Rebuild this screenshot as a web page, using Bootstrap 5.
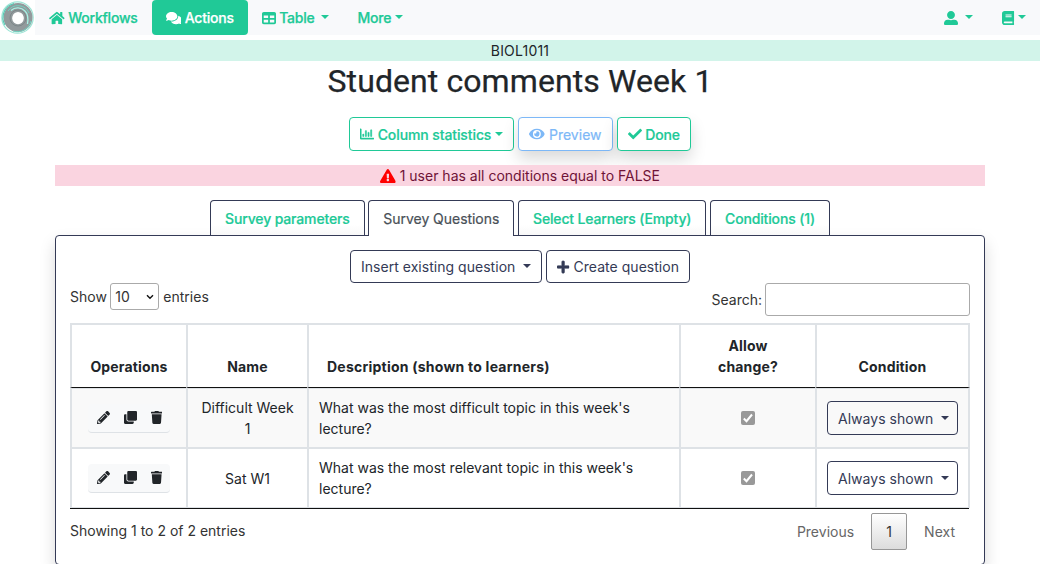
<!DOCTYPE html>
<html lang="en">
<head>
<meta charset="utf-8">
<meta name="viewport" content="width=device-width, initial-scale=1">
<title>Student comments Week 1</title>
<link href="https://cdn.jsdelivr.net/npm/bootstrap@5.3.0/dist/css/bootstrap.min.css" rel="stylesheet">
<style>
:root{--brand:#20c997;--ink:#343a56}
html,body{height:564px;overflow:hidden}
body{font-family:Inter,"Liberation Sans",sans-serif;font-size:14px;line-height:21px;color:#212529}
svg.ic{height:1em;width:auto;fill:currentColor;vertical-align:-.125em;flex:none}
.topbar{height:35px;background:#f8f9fb;padding:0}
.logo-box{width:35px;height:35px;background:#fff}
.topbar .nav-link{height:35px;padding:7px 14px;color:var(--brand);font-weight:500;letter-spacing:-.24px;-webkit-text-stroke:.25px;border-radius:4px;white-space:nowrap}
.topbar .nav-link.active{background:#20c997;color:#fff}
.topbar svg.ic{stroke:none}
.dropdown-toggle::after{vertical-align:4px;border-top-width:4px;border-left-width:4px;border-right-width:4px;margin-left:4px}
.topbar .dropdown-toggle::after{margin-left:3.5px}
.topbar .user-link{padding-right:15px}
.course{margin-top:5px;height:21px;background:#d2f4ea;letter-spacing:.2px}
h1{font-family:Roboto,sans-serif;font-size:32px;line-height:40px;height:38px;font-weight:400;letter-spacing:.09px;-webkit-text-stroke:.25px}
.page{width:930px}
.btn{font-size:14px;line-height:21px;padding:5px 10px;border-radius:4px;white-space:nowrap}
.btn-brand{color:var(--brand);border-color:var(--brand);font-weight:500;letter-spacing:-.1px;-webkit-text-stroke:.2px;background:#fff;height:34px;padding-top:5px}
.btn-brand svg.ic{stroke:none}
.btn-brand.btn-prev{color:#7db8f7;border-color:#7db8f7;font-weight:400;letter-spacing:0}
.lift{box-shadow:0 8px 16px rgba(0,0,0,.15)}
.btn-ink{color:var(--ink);border-color:var(--ink);height:33px;letter-spacing:.03px}
.toolbar{margin-top:18px}
.warnbar{height:21px;margin-top:14px;background:#fad4e0;color:#6f1337}
.warnbar svg.ic{color:red}
.survey-tabs{gap:3.700px;margin-top:14px}
.survey-tabs .nav-link{height:35px;padding:7px 14px;border:1px solid var(--ink);border-bottom:0;border-radius:4px 4px 0 0;color:var(--brand);font-weight:500;letter-spacing:-.15px;-webkit-text-stroke:.2px;background:linear-gradient(#fff 70%,#f8f8f8);white-space:nowrap}
.survey-tabs .nav-link.active{height:36px;margin-bottom:-1px;color:#495057;font-weight:400;letter-spacing:-.04px;background:#fff;position:relative;z-index:1}
.panel{border:1px solid var(--ink);border-radius:4px;height:330px;padding:14px;box-shadow:0 8px 16px rgba(0,0,0,.15);background:#fff}
.filters{height:33px;margin-bottom:7px;color:#333}
.len-row{height:27px}
.len{width:49px;height:27px;border:1px solid #aaa;border-radius:3px;padding:2px 4px;margin:0 4px 0 3.500px}
.find{width:205px;height:33px;border:1px solid #aaa;border-radius:3px;margin-left:3px}
.tbl-wrap{border-bottom:1px solid #111;height:186px;width:899px}
.qtable{border-collapse:separate;border-spacing:0;table-layout:fixed;width:900px}
.qtable th,.qtable td{border:0 solid #dee2e6;border-left-width:2px;text-align:center;vertical-align:middle;padding:0 9px}
.qtable th:last-child,.qtable td:last-child{border-right-width:2px}
.qtable th{height:65px;border-top-width:2px;border-bottom:1px solid #111;vertical-align:bottom;padding:0 17px 10px;font-weight:700;letter-spacing:.15px}
.qtable th.text-start{padding-left:18px;letter-spacing:.23px}
.qtable td{height:60px;border-top-width:2px}
.qtable td.text-start{padding-left:10px}
.qtable tbody tr:first-child td{height:59px;border-top-width:1px;background:#f9f9f9}
.qtable tbody tr:last-child td{height:61px;border-bottom:1px solid #dee2e6}
.ops{width:82px;height:29px;background:#f8f9fa;border-radius:4px;border-bottom:1px solid #dee2e6;font-size:13px;gap:14px;margin:0 auto;padding-left:1px}
.tick{width:14px;height:14px;background:#999;border-radius:2px;margin-top:4px}
.cond{height:34px;width:131px}
.foot{margin-top:4px;color:#333}
.foot>div:first-child{padding-top:7px}
.pager{padding-right:15px}
.pager>span{color:#666}
.pager .cur{width:36px;height:37px;margin:0 17px;border:1px solid #979797;border-radius:2px;background:linear-gradient(#fff,#dcdcdc);color:#333}
</style>
</head>
<body>
<svg class="d-none">
<symbol id="home" viewBox="0 0 576 512"><path d="M280.37 148.26L96 300.11V464a16 16 0 0 0 16 16l112.06-.29a16 16 0 0 0 15.92-16V368a16 16 0 0 1 16-16h64a16 16 0 0 1 16 16v95.64a16 16 0 0 0 16 16.05L464 480a16 16 0 0 0 16-16V300L295.67 148.26a12.19 12.19 0 0 0-15.3 0zM571.6 251.47L488 182.56V44.05a12 12 0 0 0-12-12h-56a12 12 0 0 0-12 12v72.61L318.47 43a48 48 0 0 0-61 0L4.34 251.47a12 12 0 0 0-1.6 16.9l25.5 31A12 12 0 0 0 45.15 301l235.22-193.74a12.19 12.19 0 0 1 15.3 0L530.9 301a12 12 0 0 0 16.9-1.6l25.5-31a12 12 0 0 0-1.7-16.93z"/></symbol>
<symbol id="comments" viewBox="0 0 576 512"><path d="M416 192c0-88.4-93.1-160-208-160S0 103.6 0 192c0 34.3 14.1 65.9 38 92-13.4 30.2-35.5 54.2-35.8 54.5-2.2 2.3-2.8 5.7-1.5 8.7S4.8 352 8 352c36.6 0 66.9-12.3 88.7-25 32.2 15.7 70.3 25 111.3 25 114.9 0 208-71.6 208-160zm122 220c23.9-26 38-57.7 38-92 0-66.9-53.5-124.2-129.3-148.1.9 6.6 1.3 13.3 1.3 20.1 0 105.9-107.7 192-240 192-10.8 0-21.3-.8-31.7-1.9C207.8 439.6 281.8 480 368 480c41 0 79.1-9.2 111.3-25 21.8 12.7 52.1 25 88.7 25 3.2 0 6.1-1.9 7.3-4.8 1.3-2.9.7-6.3-1.5-8.7-.3-.3-22.4-24.2-35.8-54.5z"/></symbol>
<symbol id="grid" viewBox="0 0 512 512"><path d="M64 256V160H224v96H64zm0 64H224v96H64V320zm224 96V320H448v96H288zM448 256H288V160H448v96zM64 32C28.7 32 0 60.7 0 96V416c0 35.3 28.7 64 64 64H448c35.3 0 64-28.7 64-64V96c0-35.3-28.7-64-64-64H64z"/></symbol>
<symbol id="user" viewBox="0 0 512 512"><path d="M256 288c79.5 0 144-64.5 144-144S335.5 0 256 0 112 64.5 112 144s64.5 144 144 144zm128 32h-55.1c-22.2 10.2-46.9 16-72.9 16s-50.6-5.8-72.9-16H128C57.3 320 0 377.3 0 448v16c0 26.5 21.5 48 48 48h416c26.5 0 48-21.5 48-48v-16c0-70.7-57.3-128-128-128z"/></symbol>
<symbol id="book" viewBox="0 0 448 512"><path d="M448 360V24c0-13.3-10.7-24-24-24H96C43 0 0 43 0 96v320c0 53 43 96 96 96h328c13.3 0 24-10.7 24-24v-16c0-7.5-3.5-14.3-8.9-18.7-4.2-15.4-4.2-59.3 0-74.7 5.4-4.3 8.9-11.1 8.9-18.6zM128 134c0-3.3 2.7-6 6-6h212c3.3 0 6 2.7 6 6v20c0 3.3-2.7 6-6 6H134c-3.3 0-6-2.7-6-6v-20zm0 64c0-3.3 2.7-6 6-6h212c3.3 0 6 2.7 6 6v20c0 3.3-2.7 6-6 6H134c-3.3 0-6-2.7-6-6v-20zm253.4 250H96c-17.7 0-32-14.3-32-32 0-17.6 14.4-32 32-32h285.4c-1.9 17.1-1.9 46.9 0 64z"/></symbol>
<symbol id="chart" viewBox="0 0 512 512"><path d="M396.8 352h22.4c6.4 0 12.8-6.4 12.8-12.8V108.8c0-6.4-6.4-12.8-12.8-12.8h-22.4c-6.4 0-12.8 6.4-12.8 12.8v230.4c0 6.4 6.4 12.8 12.8 12.8zm-192 0h22.4c6.4 0 12.8-6.4 12.8-12.8V140.8c0-6.4-6.4-12.8-12.8-12.8h-22.4c-6.4 0-12.8 6.4-12.8 12.8v198.4c0 6.4 6.4 12.8 12.8 12.8zm96 0h22.4c6.4 0 12.8-6.4 12.8-12.8V204.8c0-6.4-6.4-12.8-12.8-12.8h-22.4c-6.4 0-12.8 6.4-12.8 12.8v134.4c0 6.4 6.4 12.8 12.8 12.8zM496 400H48V80c0-8.84-7.16-16-16-16H16C7.16 64 0 71.16 0 80v336c0 17.67 14.33 32 32 32h464c8.84 0 16-7.16 16-16v-16c0-8.84-7.16-16-16-16zm-387.2-48h22.4c6.4 0 12.8-6.4 12.8-12.8v-70.4c0-6.4-6.4-12.8-12.8-12.8h-22.4c-6.4 0-12.8 6.4-12.8 12.8v70.4c0 6.4 6.4 12.8 12.8 12.8z" stroke="currentColor" stroke-width="14"/></symbol>
<symbol id="eye" viewBox="0 0 576 512"><path d="M572.52 241.4C518.29 135.59 410.93 64 288 64S57.68 135.64 3.48 241.41a32.35 32.35 0 0 0 0 29.19C57.71 376.41 165.07 448 288 448s230.32-71.64 284.52-177.41a32.35 32.35 0 0 0 0-29.19zM288 400a144 144 0 1 1 144-144 143.93 143.93 0 0 1-144 144zm0-240a95.31 95.31 0 0 0-25.31 3.79 47.85 47.85 0 0 1-66.9 66.9A95.78 95.78 0 1 0 288 160z"/></symbol>
<symbol id="check" viewBox="0 0 512 512"><path d="M173.898 439.404l-166.4-166.4c-9.997-9.997-9.997-26.206 0-36.204l36.203-36.204c9.997-9.998 26.207-9.998 36.204 0L192 312.69 432.095 72.596c9.997-9.997 26.207-9.997 36.204 0l36.203 36.204c9.997 9.997 9.997 26.206 0 36.204l-294.4 294.401c-9.998 9.997-26.207 9.997-36.204-.001z"/></symbol>
<symbol id="warn" viewBox="0 0 576 512"><path d="M569.517 440.013C587.975 472.007 564.806 512 527.94 512H48.054c-36.937 0-59.999-40.055-41.577-71.987L246.423 23.985c18.467-32.009 64.72-31.951 83.154 0l239.94 416.028zM288 354c-25.405 0-46 20.595-46 46s20.595 46 46 46 46-20.595 46-46-20.595-46-46-46zm-43.673-165.346l7.418 136c.347 6.364 5.609 11.346 11.982 11.346h48.546c6.373 0 11.635-4.982 11.982-11.346l7.418-136c.375-6.874-5.098-12.654-11.982-12.654h-63.383c-6.884 0-12.356 5.78-11.981 12.654z"/></symbol>
<symbol id="plus" viewBox="0 0 448 512"><path d="M416 208H272V64c0-17.67-14.33-32-32-32h-32c-17.67 0-32 14.33-32 32v144H32c-17.67 0-32 14.33-32 32v32c0 17.67 14.33 32 32 32h144v144c0 17.67 14.33 32 32 32h32c17.67 0 32-14.33 32-32V304h144c17.67 0 32-14.33 32-32v-32c0-17.67-14.33-32-32-32z" stroke="currentColor" stroke-width="20"/></symbol>
<symbol id="pencil" viewBox="0 0 512 512"><path d="M497.9 142.1l-46.1 46.1c-4.7 4.7-12.3 4.7-17 0l-111-111c-4.7-4.7-4.7-12.3 0-17l46.1-46.1c18.7-18.7 49.1-18.7 67.9 0l60.1 60.1c18.8 18.7 18.8 49.1 0 67.9zM284.2 99.8L21.6 362.4.4 483.9c-2.9 16.4 11.4 30.6 27.8 27.8l121.5-21.3 262.6-262.6c4.7-4.7 4.7-12.3 0-17l-111-111c-4.800-4.700-12.400-4.700-17.100 0zM124.1 339.9c-5.5-5.5-5.5-14.3 0-19.8l154-154c5.5-5.5 14.3-5.5 19.8 0s5.500 14.300 0 19.800l-154 154c-5.500 5.500-14.300 5.500-19.800 0zM88 424h48v36.300l-64.500 11.300-31.100-31.100L51.700 376H88v48z"/></symbol>
<symbol id="clone" viewBox="0 0 512 512"><path d="M464 0c26.51 0 48 21.49 48 48v288c0 26.51-21.49 48-48 48H176c-26.51 0-48-21.49-48-48V48c0-26.51 21.49-48 48-48h288M176 416c-44.112 0-80-35.888-80-80V128H48c-26.51 0-48 21.49-48 48v288c0 26.51 21.49 48 48 48h288c26.51 0 48-21.49 48-48v-48H176z"/></symbol>
<symbol id="trash" viewBox="0 0 448 512"><path d="M432 32H312l-9.4-18.7A24 24 0 0 0 281.1 0H166.8a23.72 23.72 0 0 0-21.4 13.3L136 32H16A16 16 0 0 0 0 48v32a16 16 0 0 0 16 16h416a16 16 0 0 0 16-16V48a16 16 0 0 0-16-16zM53.2 467a48 48 0 0 0 47.9 45h245.8a48 48 0 0 0 47.9-45L416 128H32z"/></symbol>
</svg>

<nav class="topbar d-flex">
  <div class="logo-box">
    <svg width="35" height="35" viewBox="0 0 35 35" fill="none" class="d-block">
      <circle cx="17.5" cy="17.5" r="15.7" stroke="#9de5d6" stroke-width="1.2"/>
      <circle cx="18" cy="17.5" r="10" stroke="#929a9c" stroke-width="9"/>
      <path d="M5 25A14.5 14.5 0 0 1 14 3.5" stroke="#58c9b4" stroke-width="1.2"/>
      <path d="M8 11A12 12 0 0 1 29 13M31 21A14 14 0 0 1 13 31" stroke="#6fd3c1"/>
      <path d="M11 10.500A10 10 0 0 1 25 11Q29 15 27.500 24" stroke="#a9f2e5" stroke-width="1.300"/>
      <circle cx="18" cy="18" r="8" stroke="#7c8789" stroke-width="1"/>
      <circle cx="18" cy="18.500" r="5.700" fill="#fff"/>
    </svg>
  </div>
  <a class="nav-link" href="#"><svg class="ic" viewBox="0 0 576 512"><use href="#home"/></svg> Workflows</a>
  <a class="nav-link active" href="#"><svg class="ic" viewBox="0 0 576 512"><use href="#comments"/></svg> Actions</a>
  <a class="nav-link dropdown-toggle" href="#"><svg class="ic" viewBox="0 0 512 512"><use href="#grid"/></svg> Table </a>
  <a class="nav-link dropdown-toggle" href="#">More</a>
  <a class="nav-link dropdown-toggle ms-auto user-link" href="#"><svg class="ic" viewBox="0 0 512 512"><use href="#user"/></svg> </a>
  <a class="nav-link dropdown-toggle" href="#"><svg class="ic" viewBox="0 0 448 512"><use href="#book"/></svg></a>
</nav>
<div class="course text-center">BIOL1011</div>

<main class="page mx-auto">
  <h1 class="text-center mb-0">Student comments Week 1</h1>
  <div class="toolbar d-flex justify-content-center gap-1">
    <button class="btn btn-brand dropdown-toggle"><svg class="ic" viewBox="0 0 512 512"><use href="#chart"/></svg> Column statistics</button>
    <button class="btn btn-brand btn-prev lift"><svg class="ic" viewBox="0 0 576 512"><use href="#eye"/></svg> Preview</button>
    <button class="btn btn-brand lift"><svg class="ic" viewBox="0 0 512 512"><use href="#check"/></svg> Done</button>
  </div>
  <div class="warnbar text-center position-relative"><svg class="ic" viewBox="0 0 576 512"><use href="#warn"/></svg> 1 user has all conditions equal to FALSE</div>
  <div class="nav survey-tabs justify-content-center">
    <a class="nav-link" href="#">Survey parameters</a>
    <a class="nav-link active" href="#">Survey Questions</a>
    <a class="nav-link" href="#">Select Learners (Empty)</a>
    <a class="nav-link" href="#">Conditions (1)</a>
  </div>
  <section class="panel">
    <div class="d-flex justify-content-center gap-1">
      <button class="btn btn-ink dropdown-toggle">Insert existing question </button>
      <button class="btn btn-ink"><svg class="ic" viewBox="0 0 448 512"><use href="#plus"/></svg> Create question</button>
    </div>
    <div class="filters d-flex justify-content-between">
      <div class="len-row d-flex align-items-center">Show <span class="len d-flex align-items-center justify-content-between">10 <svg width="8" height="6" viewBox="0 0 8 6" fill="none" stroke="#111" stroke-width="1.400"><path d="M1 1.200l3 3 3-3"/></svg></span> entries</div>
      <label class="d-flex align-items-center">Search:<input class="find" type="text"></label>
    </div>
    <div class="tbl-wrap">
    <table class="qtable">
      <colgroup><col style="width:116px"><col style="width:121px"><col style="width:372px"><col style="width:136px"><col style="width:155px"></colgroup>
      <thead><tr><th>Operations</th><th>Name</th><th class="text-start">Description (shown to learners)</th><th>Allow change?</th><th>Condition</th></tr></thead>
      <tbody>
        <tr>
          <td><div class="ops d-flex align-items-center justify-content-center"><svg class="ic" viewBox="0 0 512 512"><use href="#pencil"/></svg><svg class="ic" viewBox="0 0 512 512"><use href="#clone"/></svg><svg class="ic" viewBox="0 0 448 512"><use href="#trash"/></svg></div></td>
          <td>Difficult Week 1</td>
          <td class="text-start">What was the most difficult topic in this week's lecture?</td>
          <td><span class="tick d-inline-flex align-items-center justify-content-center"><svg width="12" height="12" viewBox="0 0 12 12" fill="none" stroke="#fff" stroke-width="2"><path d="M1.800 6.500l2.700 2.700L10 2.500"/></svg></span></td>
          <td><button class="btn btn-ink cond dropdown-toggle">Always shown </button></td>
        </tr>
        <tr>
          <td><div class="ops d-flex align-items-center justify-content-center"><svg class="ic" viewBox="0 0 512 512"><use href="#pencil"/></svg><svg class="ic" viewBox="0 0 512 512"><use href="#clone"/></svg><svg class="ic" viewBox="0 0 448 512"><use href="#trash"/></svg></div></td>
          <td>Sat W1</td>
          <td class="text-start">What was the most relevant topic in this week's lecture?</td>
          <td><span class="tick d-inline-flex align-items-center justify-content-center"><svg width="12" height="12" viewBox="0 0 12 12" fill="none" stroke="#fff" stroke-width="2"><path d="M1.800 6.500l2.700 2.700L10 2.500"/></svg></span></td>
          <td><button class="btn btn-ink cond dropdown-toggle">Always shown </button></td>
        </tr>
      </tbody>
    </table>
    </div>
    <div class="foot d-flex justify-content-between">
      <div>Showing 1 to 2 of 2 entries</div>
      <div class="pager d-flex align-items-center"><span>Previous</span><span class="cur d-flex align-items-center justify-content-center">1</span><span>Next</span></div>
    </div>
  </section>
</main>
<script src="https://cdn.jsdelivr.net/npm/bootstrap@5.3.0/dist/js/bootstrap.bundle.min.js"></script>
</body>
</html>
